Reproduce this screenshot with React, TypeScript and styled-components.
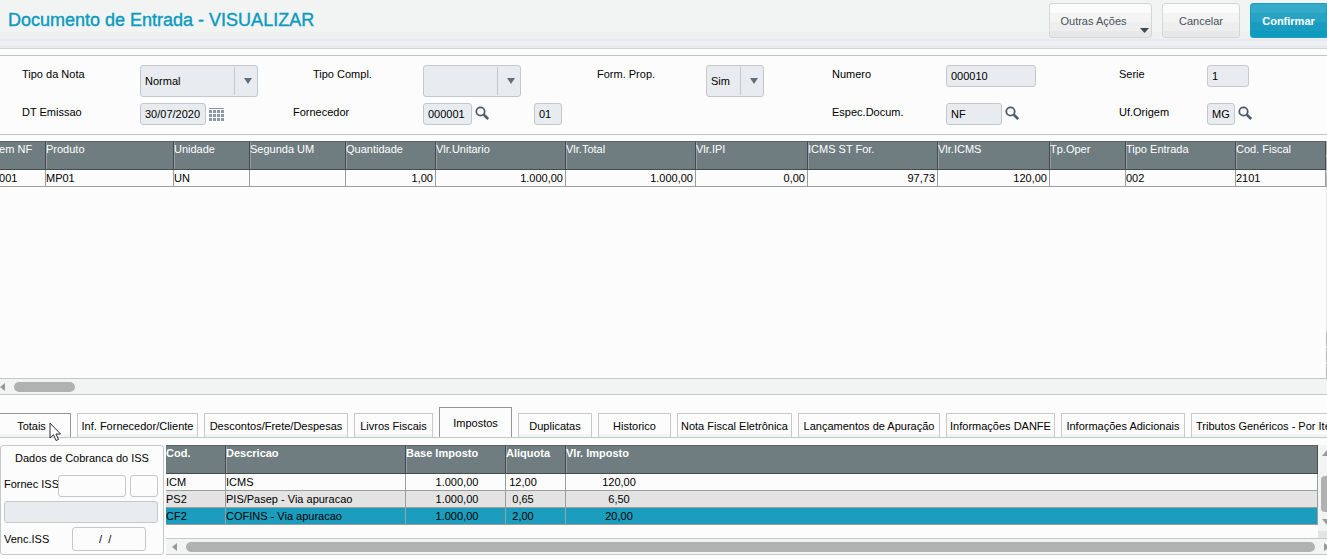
import React from 'react';
import styled, { createGlobalStyle } from 'styled-components';

const GlobalStyle = createGlobalStyle`
  * { box-sizing: border-box; }
  body { margin: 0; background: #fcfcfc; overflow: hidden; }
  body, button, input, select, table {
    font-family: "Liberation Sans", Arial, sans-serif;
    font-size: 11px;
    color: #000;
  }
`;

const Page = styled.div`
  display: flex;
  flex-direction: column;
  min-height: 100vh;
  overflow: hidden;
`;

const Header = styled.header`
  display: flex;
  align-items: flex-start;
  justify-content: space-between;
  height: 49px;
  flex: none;
  padding-left: 8px;
  background: linear-gradient(#f2f4f3 0 32px, #eeeff1 32px 39px, #e9eaf1 39px 41px, #eff0f2 41px 45px, #eaebf0 45px);
  border-bottom: 1px solid #d0d2d3;
`;

const Title = styled.h1`
  margin: 0;
  font-size: 18px;
  line-height: 40px;
  font-weight: 400;
  color: #0c9abe;
  -webkit-text-stroke: 0.4px #0c9abe;
`;

const Actions = styled.div`
  display: flex;
  gap: 10px;
  padding-top: 3px;
`;

const ActionButton = styled.button<{ $primary?: boolean; $width: number; $menu?: boolean }>`
  position: relative;
  width: ${p => p.$width}px;
  height: 35px;
  padding: 0 ${p => (p.$menu ? 14 : 0)}px 0 0;
  border: 1px solid ${p => (p.$primary ? '#1a9dbf' : '#d5d6d6')};
  border-radius: ${p => (p.$primary ? '3px 0 0 3px' : '3px')};
  background: ${p =>
    p.$primary
      ? 'linear-gradient(#35aac9 0 9px, #27a3c4 9px 18px, #1a9cc0 18px 27px, #0f9abf 27px)'
      : 'linear-gradient(#fbfbfb 0 9px, #f4f4f4 9px 18px, #eeeeee 18px 27px, #e8e8e8 27px)'};
  color: ${p => (p.$primary ? '#fff' : '#4a525c')};
  font-weight: ${p => (p.$primary ? 700 : 400)};
`;

const MenuArrow = styled.svg`
  position: absolute;
  right: 2px;
  bottom: 4px;
`;

const FormPanel = styled.form`
  flex: none;
  display: grid;
  grid-template-columns: 118fr 153fr 130fr 174fr 109fr 126fr 114fr 173fr 88fr 120fr;
  grid-template-rows: 32px 22px;
  row-gap: 6px;
  margin: 6px 0;
  padding: 9px 0 9px 22px;
  border-top: 1px solid #bfc2c2;
  border-bottom: 1px solid #bfc2c2;
`;

const Label = styled.label<{ $indent?: boolean }>`
  min-width: 0;
  line-height: 19px;
  padding-left: ${p => (p.$indent ? 20 : 0)}px;
  white-space: nowrap;
`;

const Control = styled.div`
  min-width: 0;
  display: flex;
  align-items: flex-start;
`;

const Field = styled.input<{ $width?: number; $empty?: boolean }>`
  flex: none;
  width: ${p => (p.$width ? `${p.$width}px` : '100%')};
  height: 22px;
  padding: 0 4px;
  border: 1px solid #c4c8cb;
  border-radius: 3px;
  background: ${p => (p.$empty ? '#fcfcfc' : '#e8ecf1')};
  outline: none;
`;

const SecondField = styled(Field)`
  margin-left: 44px;
`;

const SelectBox = styled.div<{ $width: number }>`
  position: relative;
  width: ${p => p.$width}px;
  height: 32px;
`;

const Select = styled.select`
  appearance: none;
  width: 100%;
  height: 100%;
  padding: 0 28px 0 4px;
  border: 1px solid #c4c8cb;
  border-radius: 3px;
  background: #e8ecf1;
  outline: none;
`;

const SelectArrow = styled.span`
  position: absolute;
  top: 2px;
  right: 1px;
  width: 23px;
  height: 28px;
  border-left: 1px solid #c4c8cb;
  display: flex;
  align-items: center;
  justify-content: center;
  padding-left: 3px;
  pointer-events: none;
`;

const IconButton = styled.button`
  display: flex;
  padding: 3px 0 0 3px;
  border: 0;
  background: none;
`;

const GridArea = styled.section`
  display: flex;
  flex: 1;
  min-height: 0;
`;

const GridView = styled.div`
  flex: 1;
  min-width: 0;
  overflow: hidden;
`;

const SideRail = styled.div`
  width: 1px;
  flex: none;
  display: flex;
  flex-direction: column;
  justify-content: space-between;
  background: #e6e6e6;
`;

const RailGroup = styled.div`
  display: flex;
  flex-direction: column;
  gap: 2px;
`;

const RailBox = styled.div`
  height: 14px;
  border: 1px solid #b8baba;
  border-right: 0;
  background: #fcfcfc;
`;

const Table = styled.table<{ $scrolled?: boolean }>`
  border-collapse: separate;
  border-spacing: 0;
  table-layout: fixed;
  width: ${p => (p.$scrolled ? 'calc(100% + 7px)' : '100%')};
  margin-left: ${p => (p.$scrolled ? -7 : 0)}px;
`;

const Th = styled.th<{ $bold?: boolean }>`
  height: 29px;
  padding: 0;
  vertical-align: top;
  text-align: left;
  line-height: 14px;
  white-space: nowrap;
  color: #fff;
  font-weight: ${p => (p.$bold ? 700 : 400)};
  background: #6f7d81;
  border-top: 1px solid #5a6468;
  border-bottom: 1px solid #454a4e;
  border-right: 1px solid #454a4e;
  & + & { box-shadow: inset 1px 0 #949da0; }
`;

const Td = styled.td<{ $right?: boolean }>`
  height: 17px;
  padding: 0 ${p => (p.$right ? 2 : 0)}px 0 0;
  line-height: 16px;
  white-space: nowrap;
  text-align: ${p => (p.$right ? 'right' : 'left')};
  border-right: 1px solid #9c9e9e;
  border-bottom: 1px solid #9c9e9e;
`;

const rowColors = { plain: '#fcfcfc', shaded: '#e3e3e3', selected: '#1d9dbd' };
const Row = styled.tr<{ $tone: keyof typeof rowColors }>`
  background: ${p => rowColors[p.$tone]};
`;

const TaxRow = styled(Row)`
  td:not(:last-child):nth-child(-n + 1) { border-right-color: #9c9e9e; }
`;

const Figure = styled.span<{ $width: number }>`
  display: inline-block;
  width: ${p => p.$width}px;
  text-align: center;
`;

const ScrollTrack = styled.div<{ $inset?: boolean }>`
  flex: none;
  display: flex;
  align-items: center;
  gap: 9px;
  height: 17px;
  padding: 0 0 0 ${p => (p.$inset ? 6 : 0)}px;
  border-top: 1px solid #c4c8c7;
  border-bottom: 1px solid #c4c8c7;
  background: #f1f4f3;
`;

const Thumb = styled.div<{ $width?: number }>`
  height: 10px;
  border-radius: 5px;
  background: #b1b1b1;
  ${p => (p.$width ? `width: ${p.$width}px;` : 'flex: 1;')}
`;

const Tabs = styled.div`
  flex: none;
  display: flex;
  align-items: flex-end;
  gap: 6px;
  height: 31px;
  margin: 12px 0 7px -8px;
  border-bottom: 1px solid #c4c8c7;
`;

const Tab = styled.button<{ $width: number; $active?: boolean; $hover?: boolean }>`
  position: relative;
  flex: none;
  width: ${p => p.$width}px;
  height: ${p => (p.$active ? 30 : 24)}px;
  padding: 0;
  border: 1px solid ${p => (p.$active || p.$hover ? '#949696' : '#c8cac9')};
  border-bottom: 0;
  background: ${p => (p.$active ? '#fcfcfc' : 'linear-gradient(#fcfcfc 0 20px, #f1f4f3 20px)')};
  white-space: nowrap;
`;

const Pointer = styled.svg`
  position: absolute;
  left: 56px;
  top: 8px;
  z-index: 1;
`;

const Bottom = styled.section`
  flex: none;
  display: flex;
  gap: 2px;
  height: 110px;
  margin-bottom: 4px;
`;

const IssPanel = styled.fieldset`
  flex: none;
  width: 164px;
  margin: 0;
  padding: 3px 5px 0 3px;
  border: 1px solid #c4c8cb;
  border-radius: 3px;
  display: flex;
  flex-direction: column;
  gap: 4px;
`;

const IssTitle = styled.div`
  height: 22px;
  line-height: 19px;
  padding-left: 11px;
`;

const IssRow = styled.div<{ $spread?: boolean }>`
  display: flex;
  gap: 4px;
  padding-right: ${p => (p.$spread ? 12 : 0)}px;
  line-height: ${p => (p.$spread ? 24 : 19)}px;
  height: 22px;
  flex: none;
  white-space: nowrap;

  label {
    flex: 1;
    width: 0;
  }
`;

const IssDate = styled(Field)`
  height: 24px;
  padding-left: 26px;
`;

const TaxColumn = styled.div`
  flex: 1;
  min-width: 0;
  display: flex;
  flex-direction: column;
`;

const TaxBody = styled.div`
  flex: 1;
  display: flex;
  min-height: 0;
`;

const TaxView = styled.div`
  flex: 1;
  min-width: 0;
`;

const VerticalTrack = styled.div`
  flex: none;
  width: 9px;
  display: flex;
  flex-direction: column;
  align-items: flex-end;
  justify-content: space-between;
  overflow: hidden;
  padding: 5px 0 13px;
  background: linear-gradient(#f1f4f3 0 86px, #e3e3e3 86px);
`;

const VerticalThumb = styled.div`
  width: 6px;
  height: 36px;
  margin-top: 12px;
  border-radius: 4px 0 0 4px;
  background: #b1b1b1;
`;

const Down = () => (
  <svg width="8" height="6" viewBox="0 0 8 6"><path d="M0 0H8L4 6Z" fill="#646e7c" /></svg>
);

const Left = () => <svg width="5" height="8" viewBox="0 0 5 8"><path d="M5 0V8L0 4Z" fill="#989a9a" /></svg>;

const Magnifier = () => (
  <svg width="15" height="15" viewBox="0 0 15 15" fill="none" stroke="#4c5b6b">
    <circle cx="5.5" cy="5.5" r="4.2" strokeWidth="1.8" />
    <path d="M8.8 8.8L13.2 13" strokeWidth="2.6" />
  </svg>
);

const Calendar = () => (
  <svg width="16" height="16" viewBox="0 0 16 16" fill="#8e97a5">
    <rect width="15" height="1" y="2" />
    {[0, 1, 2].map(r => [0, 1, 2, 3].map(c => <rect key={`${r}${c}`} x={c * 4} y={4 + r * 4} width="3" height="3" />))}
  </svg>
);

type FieldProps = { id: string; width: number; value: string };

const Lookup = ({ id, width, value }: FieldProps) => (
  <>
    <Field id={id} $width={width} defaultValue={value} readOnly />
    <IconButton type="button" aria-label="Pesquisar"><Magnifier /></IconButton>
  </>
);

const Dropdown = ({ id, width, value }: FieldProps) => (
  <SelectBox $width={width}>
    <Select id={id} defaultValue={value}><option value={value}>{value}</option></Select>
    <SelectArrow><Down /></SelectArrow>
  </SelectBox>
);

const columns: { title: string; width?: number; value: string; right?: boolean }[] = [
  { title: 'Item NF', width: 53, value: '0001' },
  { title: 'Produto', width: 128, value: 'MP01' },
  { title: 'Unidade', width: 76, value: 'UN' },
  { title: 'Segunda UM', width: 96, value: '' },
  { title: 'Quantidade', width: 90, value: '1,00', right: true },
  { title: 'Vlr.Unitario', width: 130, value: '1.000,00', right: true },
  { title: 'Vlr.Total', width: 130, value: '1.000,00', right: true },
  { title: 'Vlr.IPI', width: 112, value: '0,00', right: true },
  { title: 'ICMS ST For.', width: 130, value: '97,73', right: true },
  { title: 'Vlr.ICMS', width: 112, value: '120,00', right: true },
  { title: 'Tp.Oper', width: 76, value: '' },
  { title: 'Tipo Entrada', width: 110, value: '002' },
  { title: 'Cod. Fiscal', value: '2101' },
];

const tabs: [string, number][] = [
  ['Totais', 79], ['Inf. Fornecedor/Cliente', 121], ['Descontos/Frete/Despesas', 144], ['Livros Fiscais', 79],
  ['Impostos', 73], ['Duplicatas', 74], ['Historico', 73], ['Nota Fiscal Eletrônica', 115],
  ['Lançamentos de Apuração', 142], ['Informações DANFE', 109], ['Informações Adicionais', 124],
  ['Tributos Genéricos - Por Item', 154],
];

const taxes: { tone: keyof typeof rowColors; cells: string[] }[] = [
  { tone: 'plain', cells: ['ICM', 'ICMS', '1.000,00', '12,00', '120,00'] },
  { tone: 'shaded', cells: ['PS2', 'PIS/Pasep - Via apuracao', '1.000,00', '0,65', '6,50'] },
  { tone: 'selected', cells: ['CF2', 'COFINS - Via apuracao', '1.000,00', '2,00', '20,00'] },
];
const figureWidths = [0, 0, 102, 34, 106];

export default function App() {
  return (
    <Page>
      <GlobalStyle />
      <Header>
        <Title>Documento de Entrada - VISUALIZAR</Title>
        <Actions>
          <ActionButton $width={103} $menu>
            Outras Ações
            <MenuArrow width="9" height="5" viewBox="0 0 9 5"><path d="M0 0H9L4.5 5Z" fill="#3f4854" /></MenuArrow>
          </ActionButton>
          <ActionButton $width={78}>Cancelar</ActionButton>
          <ActionButton $width={77} $primary>Confirmar</ActionButton>
        </Actions>
      </Header>

      <FormPanel>
        <Label htmlFor="tipo">Tipo da Nota</Label>
        <Control><Dropdown id="tipo" width={118} value="Normal" /></Control>
        <Label htmlFor="compl" $indent>Tipo Compl.</Label>
        <Control><Dropdown id="compl" width={98} value="" /></Control>
        <Label htmlFor="form">Form. Prop.</Label>
        <Control><Dropdown id="form" width={58} value="Sim" /></Control>
        <Label htmlFor="numero">Numero</Label>
        <Control><Field id="numero" $width={90} defaultValue="000010" readOnly /></Control>
        <Label htmlFor="serie">Serie</Label>
        <Control><Field id="serie" $width={42} defaultValue="1" readOnly /></Control>

        <Label htmlFor="emissao">DT Emissao</Label>
        <Control>
          <Field id="emissao" $width={66} defaultValue="30/07/2020" readOnly />
          <IconButton type="button" aria-label="Calendário"><Calendar /></IconButton>
        </Control>
        <Label htmlFor="fornecedor">Fornecedor</Label>
        <Control>
          <Lookup id="fornecedor" width={49} value="000001" />
          <SecondField $width={28} defaultValue="01" aria-label="Loja" readOnly />
        </Control>
        <span />
        <span />
        <Label htmlFor="especie">Espec.Docum.</Label>
        <Control><Lookup id="especie" width={56} value="NF" /></Control>
        <Label htmlFor="uf">Uf.Origem</Label>
        <Control><Lookup id="uf" width={28} value="MG" /></Control>
      </FormPanel>

      <GridArea>
        <GridView>
          <Table $scrolled>
            <colgroup>{columns.map(c => <col key={c.title} width={c.width} />)}</colgroup>
            <thead><tr>{columns.map(c => <Th key={c.title}>{c.title}</Th>)}</tr></thead>
            <tbody><Row $tone="plain">{columns.map(c => <Td key={c.title} $right={c.right}>{c.value}</Td>)}</Row></tbody>
          </Table>
        </GridView>
        <SideRail>
          <RailGroup><RailBox /><RailBox /><RailBox /></RailGroup>
          <RailGroup><RailBox /><RailBox /><RailBox /></RailGroup>
        </SideRail>
      </GridArea>
      <ScrollTrack><Left /><Thumb $width={61} /></ScrollTrack>

      <Tabs role="tablist">
        {tabs.map(([name, width]) => (
          <Tab key={name} role="tab" $width={width} $active={name === 'Impostos'} $hover={name === 'Totais'} aria-selected={name === 'Impostos'}>
            {name}
            {name === 'Totais' && (
              <Pointer width="13" height="20" viewBox="0 0 13 20">
                <path d="M1 1V16L4.5 12.7L7 18.5L9.5 17.4L7 12H11.5Z" fill="#fff" stroke="#2b2b44" />
              </Pointer>
            )}
          </Tab>
        ))}
      </Tabs>

      <Bottom>
        <IssPanel>
          <IssTitle>Dados de Cobranca do ISS</IssTitle>
          <IssRow>
            <label htmlFor="fornecIss">Fornec ISS</label>
            <Field id="fornecIss" $width={68} $empty />
            <Field aria-label="Loja ISS" $width={28} $empty />
          </IssRow>
          <Field aria-label="Nome do fornecedor" readOnly />
          <IssRow $spread>
            <label htmlFor="vencIss">Venc.ISS</label>
            <IssDate id="vencIss" $width={74} $empty defaultValue="/  /" />
          </IssRow>
        </IssPanel>
        <TaxColumn>
          <TaxBody>
            <TaxView>
              <Table>
                <colgroup><col width="60" /><col width="180" /><col width="100" /><col width="60" /><col /></colgroup>
                <thead>
                  <tr>{['Cod.', 'Descricao', 'Base Imposto', 'Aliquota', 'Vlr. Imposto'].map(t => <Th key={t} $bold>{t}</Th>)}</tr>
                </thead>
                <tbody>
                  {taxes.map(t => (
                    <TaxRow key={t.cells[0]} $tone={t.tone}>
                      {t.cells.map((c, i) => <Td key={i}>{figureWidths[i] ? <Figure $width={figureWidths[i]}>{c}</Figure> : c}</Td>)}
                    </TaxRow>
                  ))}
                </tbody>
              </Table>
            </TaxView>
            <VerticalTrack>
              <svg width="5" height="6" viewBox="0 0 5 6"><path d="M0 6L5 0V6Z" fill="#989a9a" /></svg>
              <VerticalThumb />
              <svg width="5" height="6" viewBox="0 0 5 6"><path d="M0 0H5V6Z" fill="#989a9a" /></svg>
            </VerticalTrack>
          </TaxBody>
          <ScrollTrack $inset>
            <Left /><Thumb />
            <svg width="3" height="8" viewBox="0 0 3 8"><path d="M0 0L3 2V6L0 8Z" fill="#989a9a" /></svg>
          </ScrollTrack>
        </TaxColumn>
      </Bottom>
    </Page>
  );
}
